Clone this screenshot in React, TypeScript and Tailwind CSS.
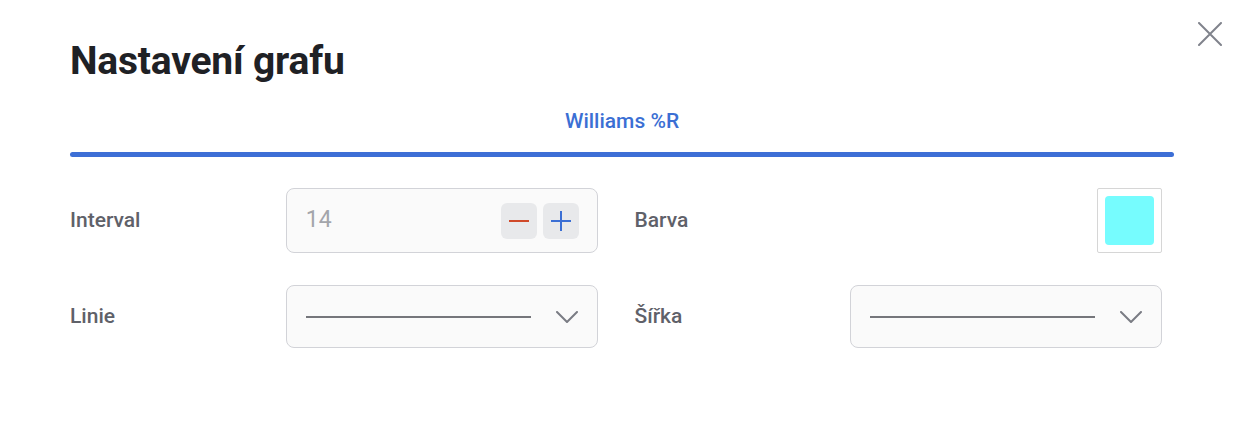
import React from "react";

function Chevron() {
  return (
    <svg width="22" height="12" viewBox="0 0 22 12" fill="none">
      <path d="M1 1 L11 11 L21 1" stroke="#7a7c84" strokeWidth="2" strokeLinecap="round" strokeLinejoin="round" />
    </svg>
  );
}

function LineSelect() {
  return (
    <div className="w-[312px] h-[63px] rounded-[8px] border border-[#d2d3d8] bg-[#fafafa] flex items-center pl-[19px] pr-[19px]">
      <div className="w-[225px] h-[2px] bg-[#75767b]" />
      <div className="ml-auto flex items-center">
        <Chevron />
      </div>
    </div>
  );
}

export default function App() {
  return (
    <div
      className="relative w-[1244px] h-[430px] bg-white px-[70px]"
      style={{ fontFamily: "Roboto, 'Noto Sans', sans-serif" }}
    >
      <button className="absolute right-[22px] top-[22px] w-[24px] h-[24px]" aria-label="close">
        <svg width="24" height="24" viewBox="0 0 24 24" fill="none">
          <path d="M1 1 L23 23 M23 1 L1 23" stroke="#80838c" strokeWidth="2" strokeLinecap="round" />
        </svg>
      </button>

      <h1 className="pt-[35px] text-[39px] leading-[52px] font-bold text-[#1f2125] tracking-[-0.2px]">
        Nastavení grafu
      </h1>

      <div className="mt-[20px] flex flex-col items-center">
        <div className="text-[21px] leading-[28px] font-medium text-[#3b6fd4]">Williams %R</div>
        <div className="mt-[17px] w-full h-[5px] rounded-full bg-[#3d6fd6]" />
      </div>

      <div className="mt-[31px] grid grid-cols-2 gap-x-[25px] gap-y-[32px]">
        <div className="flex items-center pr-3">
          <div className="w-[216px] text-[21px] font-medium text-[#5f6169]">Interval</div>
          <div className="w-[312px] h-[65px] rounded-[8px] border border-[#d2d3d8] bg-[#fafafa] flex items-center pl-[19px] pr-[18px]">
            <span className="text-[23px] text-[#a3a5ab]">14</span>
            <div className="ml-auto flex gap-[6px]">
              <div className="w-[36px] h-[36px] rounded-[6px] bg-[#e8e9eb] flex items-center justify-center">
                <div className="w-[20px] h-[2px] bg-[#d04a2a]" />
              </div>
              <div className="w-[36px] h-[36px] rounded-[6px] bg-[#e8e9eb] flex items-center justify-center">
                <svg width="20" height="20" viewBox="0 0 20 20">
                  <path d="M10 0 V20 M0 10 H20" stroke="#3b6fd4" strokeWidth="2" />
                </svg>
              </div>
            </div>
          </div>
        </div>
        <div className="flex items-center pr-3">
          <div className="w-[215px] text-[21px] font-medium text-[#5f6169]">Barva</div>
          <div className="ml-auto w-[65px] h-[65px] rounded-[2px] border border-[#d6d6d6] bg-white p-[7px]">
            <div className="w-full h-full rounded-[4px] bg-[#76fcfe]" />
          </div>
        </div>
        <div className="flex items-center pr-3">
          <div className="w-[216px] text-[21px] font-medium text-[#5f6169]">Linie</div>
          <LineSelect />
        </div>
        <div className="flex items-center pr-3">
          <div className="w-[215px] text-[21px] font-medium text-[#5f6169]">Šířka</div>
          <LineSelect />
        </div>
      </div>
    </div>
  );
}
